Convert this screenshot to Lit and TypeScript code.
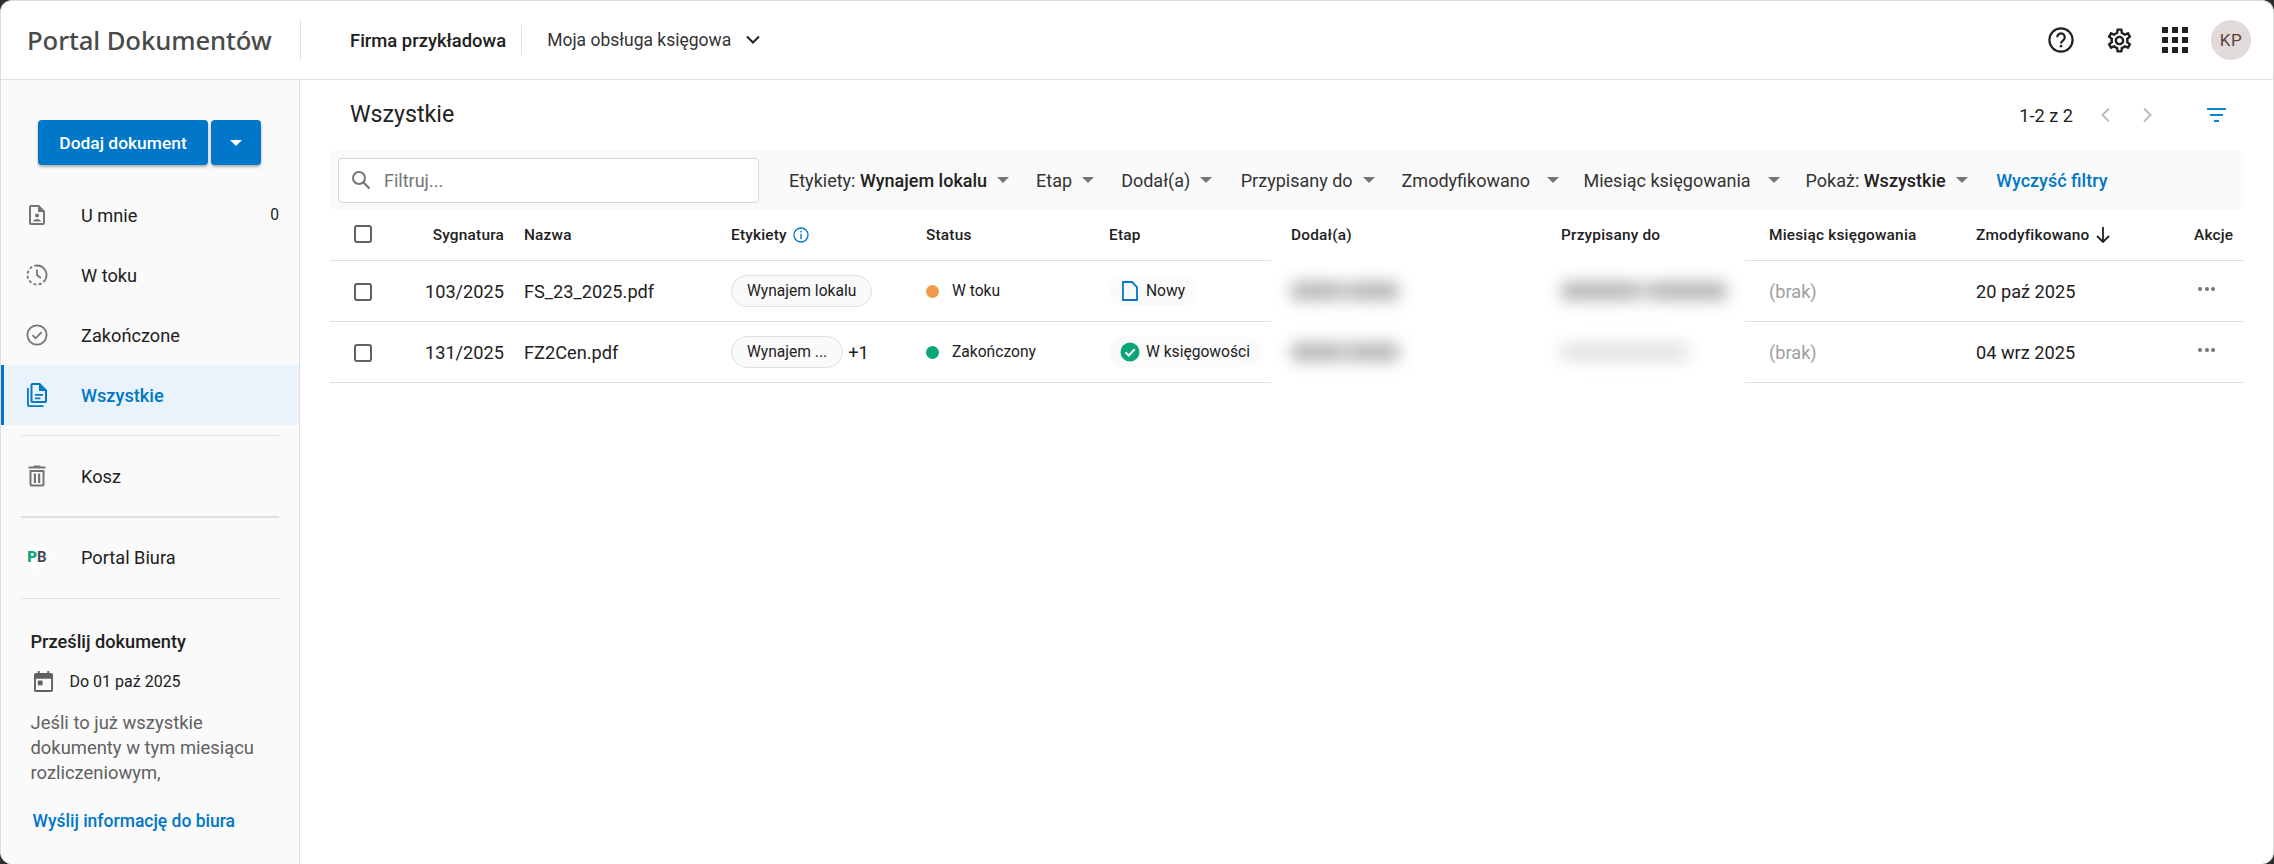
import { LitElement, html, css, svg } from "lit";
import { customElement } from "lit/decorators.js";

const caret = html`<svg class="caret" width="14" height="8" viewBox="0 0 14 8"><path d="M1 1h12L7 7z" fill="#757575"/></svg>`;

const rows = [
  { sig: "103/2025", name: "FS_23_2025.pdf", label: "Wynajem lokalu", extra: "", status: "W toku", dot: "#f2994a", stage: "Nowy", done: false, date: "20 paź 2025", w1: 108, w2: 166 },
  { sig: "131/2025", name: "FZ2Cen.pdf", label: "Wynajem ...", extra: "+1", status: "Zakończony", dot: "#0aa679", stage: "W księgowości", done: true, date: "04 wrz 2025", w1: 108, w2: 128 },
];

const filters: [string, string, string][] = [
  ["Etykiety: ", "Wynajem lokalu", ""],
  ["Etap", "", ""],
  ["Dodał(a)", "", "dodal"],
  ["Przypisany do", "", ""],
  ["Zmodyfikowano", "", "wide1"],
  ["Miesiąc księgowania", "", "wide2"],
  ["Pokaż: ", "Wszystkie", "last"],
];

const navIcons: Record<string, unknown> = {
  me: svg`<path d="M14 2H6a2 2 0 0 0-2 2v16a2 2 0 0 0 2 2h12a2 2 0 0 0 2-2V8zm4 18H6V4h7v5h5z" fill="#757575"/><circle cx="12" cy="12.5" r="2" fill="#757575"/><path d="M8 18.5c0-1.6 2.4-2.6 4-2.6s4 1 4 2.6z" fill="#757575"/>`,
  clock: svg`<path d="M12 6.5V12l3.8 3" fill="none" stroke="#757575" stroke-width="1.8"/><path d="M12 2.5A9.5 9.5 0 0 1 20.2 16.8" fill="none" stroke="#757575" stroke-width="1.8"/><path d="M20.2 16.8A9.5 9.5 0 1 1 12 2.5" fill="none" stroke="#757575" stroke-width="1.8" stroke-dasharray="3 2.2"/>`,
  check: svg`<circle cx="12" cy="12" r="9.6" fill="none" stroke="#757575" stroke-width="1.8"/><path d="M7.5 12.2l3.1 3.1 6-6.2" fill="none" stroke="#757575" stroke-width="1.8"/>`,
  all: svg`<path d="M3.8 5H2v17a2 2 0 0 0 2 2h14.5v-1.8H3.8z" fill="#0077c8"/><path d="M15 0H7.5a2 2 0 0 0-2 2v16a2 2 0 0 0 2 2H20a2 2 0 0 0 2-2V7zm5 18H7.5V2H14v6h6z" fill="#0077c8"/><path d="M10 11h8v1.8h-8zM10 14.4h5.5v1.8H10z" fill="#0077c8"/>`,
  trash: svg`<path d="M16 2.5l-1-1H9l-1 1H3.5v2h17v-2zM4.5 6v14.5a2 2 0 0 0 2 2h11a2 2 0 0 0 2-2V6zm13 14.5h-11V8h11z" fill="#757575"/><path d="M8.8 9.5h2.2v9.5H8.8zM13 9.5h2.2v9.5H13z" fill="#757575"/>`,
};

@customElement("app-root")
export class AppRoot extends LitElement {
  static styles = css`
    :host { display: block; height: 864px; background: #2e2e2e; font-family: Roboto, "Liberation Sans", sans-serif; color: #212121; overflow: hidden; }
    .frame { height: 864px; box-sizing: border-box; background: #fff; border: 1px solid #dcdcdc; border-width: 1px 1px 0 1px; border-radius: 12px; overflow: hidden; display: flex; flex-direction: column; }
    header { height: 78px; flex: none; display: flex; align-items: center; border-bottom: 1px solid #e0e0e0; }
    .logo { width: 299px; padding-left: 26px; box-sizing: border-box; font: 500 25.7px "Noto Sans", sans-serif; color: #4a4a4a; white-space: nowrap; letter-spacing: -0.1px; }
    .vsep { width: 1px; background: #e0e0e0; }
    .vsep.a { height: 40px; }
    .vsep.b { height: 30px; margin: 0 25px 0 15px; }
    .firm { margin-left: 49px; font-size: 18.4px; font-weight: 500; white-space: nowrap; }
    .svc { font-size: 17.5px; color: #333; white-space: nowrap; }
    .chev { margin-left: 14px; margin-right: 0; }
    .top-right { margin-left: auto; display: flex; align-items: center; padding-right: 22px; }
    .help { margin-right: 30px; display: block; }
    .gear { margin-right: 28px; display: block; }
    .grid { margin-right: 23px; display: block; }
    .avatar { width: 40px; height: 40px; border-radius: 50%; background: #e0dad8; color: #5d4037; display: flex; align-items: center; justify-content: center; font-size: 17px; letter-spacing: 0.5px; }
    .body { flex: 1; display: flex; min-height: 0; }
    aside { width: 299px; flex: none; box-sizing: border-box; background: #fafafa; border-right: 1px solid #e0e0e0; padding-top: 40px; }
    .btns { display: flex; gap: 3px; padding-left: 37px; margin-bottom: 20px; }
    .btn { height: 45px; background: #0077c8; color: #fff; border-radius: 4px; box-shadow: 0 2px 3px rgba(0,0,0,.3); display: flex; align-items: center; justify-content: center; font-size: 17.4px; font-weight: 500; }
    .btn.main { width: 170px; }
    .btn.drop { width: 50px; }
    .nav { height: 60px; display: flex; align-items: center; padding-left: 24px; font-size: 18.2px; box-sizing: border-box; }
    .nav svg { width: 24px; height: 24px; margin-right: 32px; flex: none; }
    .nav.active { background: #eaf3fb; color: #0077c8; font-weight: 500; border-left: 3px solid #0077c8; padding-left: 21px; }
    .count { margin-left: auto; margin-right: 20px; font-size: 15.6px; }
    .sep { height: 1px; background: #e0e0e0; margin: 0 20px; }
    .sep.first { margin-top: 10px; margin-bottom: 10px; }
    .sep.mid { height: 2px; margin-top: 10px; margin-bottom: 9px; }
    .sep.last { margin-top: 11px; }
    .pb { width: 24px; height: 24px; border-radius: 50%; background: #fff; margin-right: 32px; font-size: 15px; font-weight: 700; display: flex; align-items: center; justify-content: center; color: #4a4a4a; }
    .pb b { color: #0aa679; }
    .send { padding: 32px 20px 0 29.5px; }
    .send h4 { margin: 0; font-size: 18.2px; font-weight: 500; line-height: 21px; }
    .due { display: flex; align-items: center; margin: 18px 0 0 3px; font-size: 16px; height: 22px; }
    .due svg { margin-right: 17px; }
    .send p { margin: 18px 0 0; font-size: 18.4px; line-height: 25px; color: #616161; max-width: 240px; }
    .link { display: block; margin: 26px 0 0 2px; color: #0077c8; font-size: 17.5px; font-weight: 500; white-space: nowrap; }
    main { flex: 1; min-width: 0; padding: 0 29px 0 30px; }
    .title { height: 70px; display: flex; align-items: center; }
    .title h1 { margin: 0 0 2px 20px; font-size: 23.2px; font-weight: 400; }
    .pag { margin-left: auto; display: flex; align-items: center; font-size: 18.2px; }
    .pag svg { display: block; }
    .pag .p1 { margin-left: 26px; }
    .pag .p2 { margin-left: 31px; }
    .pag .fl { margin: 0 18px 0 53px; }
    .bar { height: 60px; background: #fafafa; border-radius: 6px; display: flex; align-items: center; padding-left: 8px; font-size: 18px; white-space: nowrap; }
    .search { width: 421px; height: 45px; box-sizing: border-box; background: #fff; border: 1px solid #d6d6d6; border-radius: 4px; display: flex; align-items: center; padding-left: 12px; color: #757575; margin-right: 30px; }
    .search svg { margin-right: 13px; }
    .f { display: flex; align-items: center; margin-right: 26px; color: #333; }
    .f b { font-weight: 500; color: #212121; white-space: pre; }
    .f span { white-space: pre; }
    .caret { margin-left: 9px; }
    .f.dodal { margin-right: 27.5px; }
    .f.wide1 .caret { margin-left: 16px; }
    .f.wide1 { margin-right: 23.5px; }
    .f.wide2 .caret { margin-left: 16px; }
    .f.wide2 { margin-right: 25px; }
    .f.last { margin-right: 27.5px; }
    .clear { color: #0077c8; font-weight: 500; }
    .row { display: grid; grid-template-columns: 80px 104px 207px 195px 183px 172px 280px 194px 221px 218px 60px; align-items: center; }
    .row > div { box-sizing: border-box; height: 100%; display: flex; align-items: center; padding-left: 10px; white-space: nowrap; border-bottom: 1px solid #e0e0e0; min-width: 0; }
    .row > .cb { padding-left: 24px; }
    .row > .sig { justify-content: flex-end; padding: 0 10px 0 0; }
    .row > .blur { border-bottom-color: transparent; }
    .row > .p20 { padding-left: 20px; }
    .row > .p24 { padding-left: 24px; }
    .head { height: 51px; font-size: 15.4px; font-weight: 500; letter-spacing: 0.2px; }
    .head > .blur { border-bottom-color: transparent; }
    .head .box { margin-bottom: 2px; }
    .data { height: 61px; font-size: 18.2px; }
    .data .box { margin-top: 2px; }
    .box { width: 18px; height: 18px; box-sizing: border-box; border: 2px solid #616161; border-radius: 3px; background: #fff; }
    .chip { height: 32px; box-sizing: border-box; border: 1px solid #e0e0e0; border-radius: 16px; background: #fafafa; display: flex; align-items: center; padding: 0 15px; font-size: 15.6px; }
    .plus { margin-left: 5px; font-size: 18.2px; }
    .dot { width: 13px; height: 13px; border-radius: 50%; margin-right: 13px; }
    .st { font-size: 15.6px; display: flex; align-items: center; }
    .stage { height: 30px; border-radius: 15px; background: #fafafa; display: flex; align-items: center; padding: 0 11px; font-size: 15.6px; }
    .stage svg { margin-right: 6px; }
    .bl { height: 18px; background: linear-gradient(90deg, #b4b4b4 0 42%, #d4d4d4 50%, #b4b4b4 58% 100%); filter: blur(8px); border-radius: 4px; }
    .bl.light { background: #e2e2e2; }
    .brak { color: #9e9e9e; }
    .dots { display: flex; gap: 2.5px; margin-left: 4px; padding-bottom: 4px; }
    .dots i { width: 4px; height: 4px; border-radius: 50%; background: #757575; display: block; }
    .arrow { margin-left: 6px; }
    .info { margin-left: 6px; }
  `;

  render() {
    return html`<div class="frame">
      <header>
        <div class="logo">Portal Dokumentów</div>
        <div class="vsep a"></div>
        <div class="firm">Firma przykładowa</div>
        <div class="vsep b"></div>
        <div class="svc">Moja obsługa księgowa</div>
        <svg class="chev" width="16" height="10" viewBox="0 0 16 10"><path d="M2 1.5l6 6 6-6" fill="none" stroke="#212121" stroke-width="2"/></svg>
        <div class="top-right">
          <svg class="help" width="28" height="28" viewBox="0 0 28 28"><circle cx="14" cy="14" r="11.6" fill="none" stroke="#212121" stroke-width="2.2"/><path d="M10.2 11.2a3.8 3.8 0 1 1 6 3.1c-1.3.9-2.2 1.6-2.2 3.2" fill="none" stroke="#212121" stroke-width="2.2"/><rect x="12.8" y="18.9" width="2.4" height="2.4" fill="#212121"/></svg>
          <svg class="gear" width="29" height="29" viewBox="0 0 24 24"><path fill="#212121" d="M19.43 12.98c.04-.32.07-.64.07-.98s-.03-.66-.07-.98l2.11-1.65c.19-.15.24-.42.12-.64l-2-3.46c-.12-.22-.39-.3-.61-.22l-2.49 1c-.52-.4-1.08-.73-1.69-.98l-.38-2.65A.488.488 0 0 0 14 2h-4c-.25 0-.46.18-.49.42l-.38 2.65c-.61.25-1.17.59-1.69.98l-2.49-1a.566.566 0 0 0-.18-.03c-.17 0-.34.09-.43.25l-2 3.46c-.13.22-.07.49.12.64l2.11 1.65c-.04.32-.07.65-.07.98s.03.66.07.98l-2.11 1.65c-.19.15-.24.42-.12.64l2 3.46c.12.22.39.3.61.22l2.49-1c.52.4 1.08.73 1.69.98l.38 2.65c.03.24.24.42.49.42h4c.25 0 .46-.18.49-.42l.38-2.65c.61-.25 1.17-.59 1.69-.98l2.49 1c.06.02.12.03.18.03.17 0 .34-.09.43-.25l2-3.46c.12-.22.07-.49-.12-.64l-2.11-1.65zm-1.98-1.71c.04.31.05.52.05.73 0 .21-.02.43-.05.73l-.14 1.13.89.7 1.08.84-.7 1.21-1.27-.51-1.04-.42-.9.68c-.43.32-.84.56-1.25.73l-1.06.43-.16 1.13-.2 1.35h-1.4l-.19-1.35-.16-1.13-1.06-.43c-.43-.18-.83-.41-1.23-.71l-.91-.7-1.06.43-1.27.51-.7-1.21 1.08-.84.89-.7-.14-1.13c-.03-.31-.05-.54-.05-.74s.02-.43.05-.73l.14-1.13-.89-.7-1.08-.84.7-1.21 1.27.51 1.04.42.9-.68c.43-.32.84-.56 1.25-.73l1.06-.43.16-1.13.2-1.35h1.39l.19 1.35.16 1.13 1.06.43c.43.18.83.41 1.23.71l.91.7 1.06-.43 1.27-.51.7 1.21-1.07.85-.89.7.14 1.13zM12 8c-2.21 0-4 1.79-4 4s1.79 4 4 4 4-1.79 4-4-1.79-4-4-4zm0 6c-1.1 0-2-.9-2-2s.9-2 2-2 2 .9 2 2-.9 2-2 2z"/></svg>
          <svg class="grid" width="26" height="26" viewBox="0 0 26 26" fill="#212121"><rect width="6" height="6"/><rect x="10" width="6" height="6"/><rect x="20" width="6" height="6"/><rect y="10" width="6" height="6"/><rect x="10" y="10" width="6" height="6"/><rect x="20" y="10" width="6" height="6"/><rect y="20" width="6" height="6"/><rect x="10" y="20" width="6" height="6"/><rect x="20" y="20" width="6" height="6"/></svg>
          <div class="avatar">KP</div>
        </div>
      </header>
      <div class="body">
        <aside>
          <div class="btns">
            <div class="btn main">Dodaj dokument</div>
            <div class="btn drop"><svg width="14" height="8" viewBox="0 0 14 8"><path d="M1 1h12L7 7z" fill="#fff"/></svg></div>
          </div>
          ${this.nav("me", "U mnie", false, "0")}
          ${this.nav("clock", "W toku")}
          ${this.nav("check", "Zakończone")}
          ${this.nav("all", "Wszystkie", true)}
          <div class="sep first"></div>
          <div class="nav"><svg viewBox="0 0 24 24">${navIcons.trash}</svg>Kosz</div>
          <div class="sep mid"></div>
          <div class="nav"><div class="pb"><b>P</b>B</div>Portal Biura</div>
          <div class="sep last"></div>
          <div class="send">
            <h4>Prześlij dokumenty</h4>
            <div class="due">
              <svg width="19" height="21" viewBox="0 0 20 22"><path fill="#616161" d="M4 0h2v2h8V0h2v2h2a2 2 0 0 1 2 2v16a2 2 0 0 1-2 2H2a2 2 0 0 1-2-2V4a2 2 0 0 1 2-2h2zM2 8v12h16V8z"/><rect x="4" y="10" width="5" height="5" fill="#616161"/></svg>
              Do 01 paź 2025
            </div>
            <p>Jeśli to już wszystkie dokumenty w tym miesiącu rozliczeniowym,</p>
            <span class="link">Wyślij informację do biura</span>
          </div>
        </aside>
        <main>
          <div class="title">
            <h1>Wszystkie</h1>
            <div class="pag">1-2 z 2
              <svg class="p1" width="12" height="16" viewBox="0 0 12 16"><path d="M10 1.5L3.5 8l6.5 6.5" fill="none" stroke="#bdbdbd" stroke-width="2"/></svg>
              <svg class="p2" width="12" height="16" viewBox="0 0 12 16"><path d="M2 1.5L8.5 8 2 14.5" fill="none" stroke="#bdbdbd" stroke-width="2"/></svg>
              <svg class="fl" width="19" height="14" viewBox="0 0 19 14" fill="#0087d1"><rect width="19" height="2"/><rect x="3" y="6" width="13" height="2"/><rect x="7" y="12" width="5" height="2"/></svg>
            </div>
          </div>
          <div class="bar">
            <div class="search">
              <svg width="20" height="20" viewBox="0 0 20 20"><circle cx="8" cy="8" r="6" fill="none" stroke="#757575" stroke-width="2"/><path d="M12.5 12.5L18.5 18.5" stroke="#757575" stroke-width="2.2"/></svg>
              Filtruj...
            </div>
            ${filters.map(([a, b, c]) => html`<div class="f ${c}"><span>${a}</span>${b ? html`<b>${b}</b>` : ""}${caret}</div>`)}
            <div class="clear">Wyczyść filtry</div>
          </div>
          <div class="row head">
            <div class="cb"><div class="box"></div></div>
            <div class="sig">Sygnatura</div>
            <div>Nazwa</div>
            <div>Etykiety
              <svg class="info" width="16" height="16" viewBox="0 0 16 16"><circle cx="8" cy="8" r="7" fill="none" stroke="#0077c8" stroke-width="1.3"/><rect x="7.3" y="7" width="1.4" height="5" fill="#0077c8"/><rect x="7.3" y="4" width="1.4" height="1.5" fill="#0077c8"/></svg>
            </div>
            <div>Status</div>
            <div>Etap</div>
            <div class="blur p20">Dodał(a)</div>
            <div class="blur">Przypisany do</div>
            <div class="p24">Miesiąc księgowania</div>
            <div>Zmodyfikowano
              <svg class="arrow" width="16" height="18" viewBox="0 0 16 18"><path d="M8 1v15M2 10l6 6 6-6" fill="none" stroke="#212121" stroke-width="1.8"/></svg>
            </div>
            <div>Akcje</div>
          </div>
          ${rows.map((r) => html`<div class="row data">
            <div class="cb"><div class="box"></div></div>
            <div class="sig">${r.sig}</div>
            <div>${r.name}</div>
            <div><span class="chip">${r.label}</span>${r.extra ? html`<span class="plus">${r.extra}</span>` : ""}</div>
            <div><span class="st"><span class="dot" style="background:${r.dot}"></span>${r.status}</span></div>
            <div><span class="stage">${r.done
              ? html`<svg width="20" height="20" viewBox="0 0 20 20"><circle cx="10" cy="10" r="9.5" fill="#0aa679"/><path d="M5.5 10.3l3.2 3.2 6-6.2" fill="none" stroke="#fff" stroke-width="2"/></svg>`
              : html`<svg width="20" height="20" viewBox="0 0 20 20"><path d="M3 1h9l5 5v13H3z" fill="none" stroke="#0077c8" stroke-width="1.8"/></svg>`}${r.stage}</span></div>
            <div class="blur p20"><div class="bl" style="width:${r.w1}px"></div></div>
            <div class="blur"><div class="bl ${r.done ? "light" : ""}" style="width:${r.w2}px"></div></div>
            <div class="p24 brak">(brak)</div>
            <div>${r.date}</div>
            <div><span class="dots"><i></i><i></i><i></i></span></div>
          </div>`)}
        </main>
      </div>
    </div>`;
  }

  nav(icon: string, label: string, active = false, count = "") {
    return html`<div class="nav ${active ? "active" : ""}"><svg viewBox="0 0 24 24">${navIcons[icon]}</svg>${label}${count ? html`<span class="count">${count}</span>` : ""}</div>`;
  }
}
